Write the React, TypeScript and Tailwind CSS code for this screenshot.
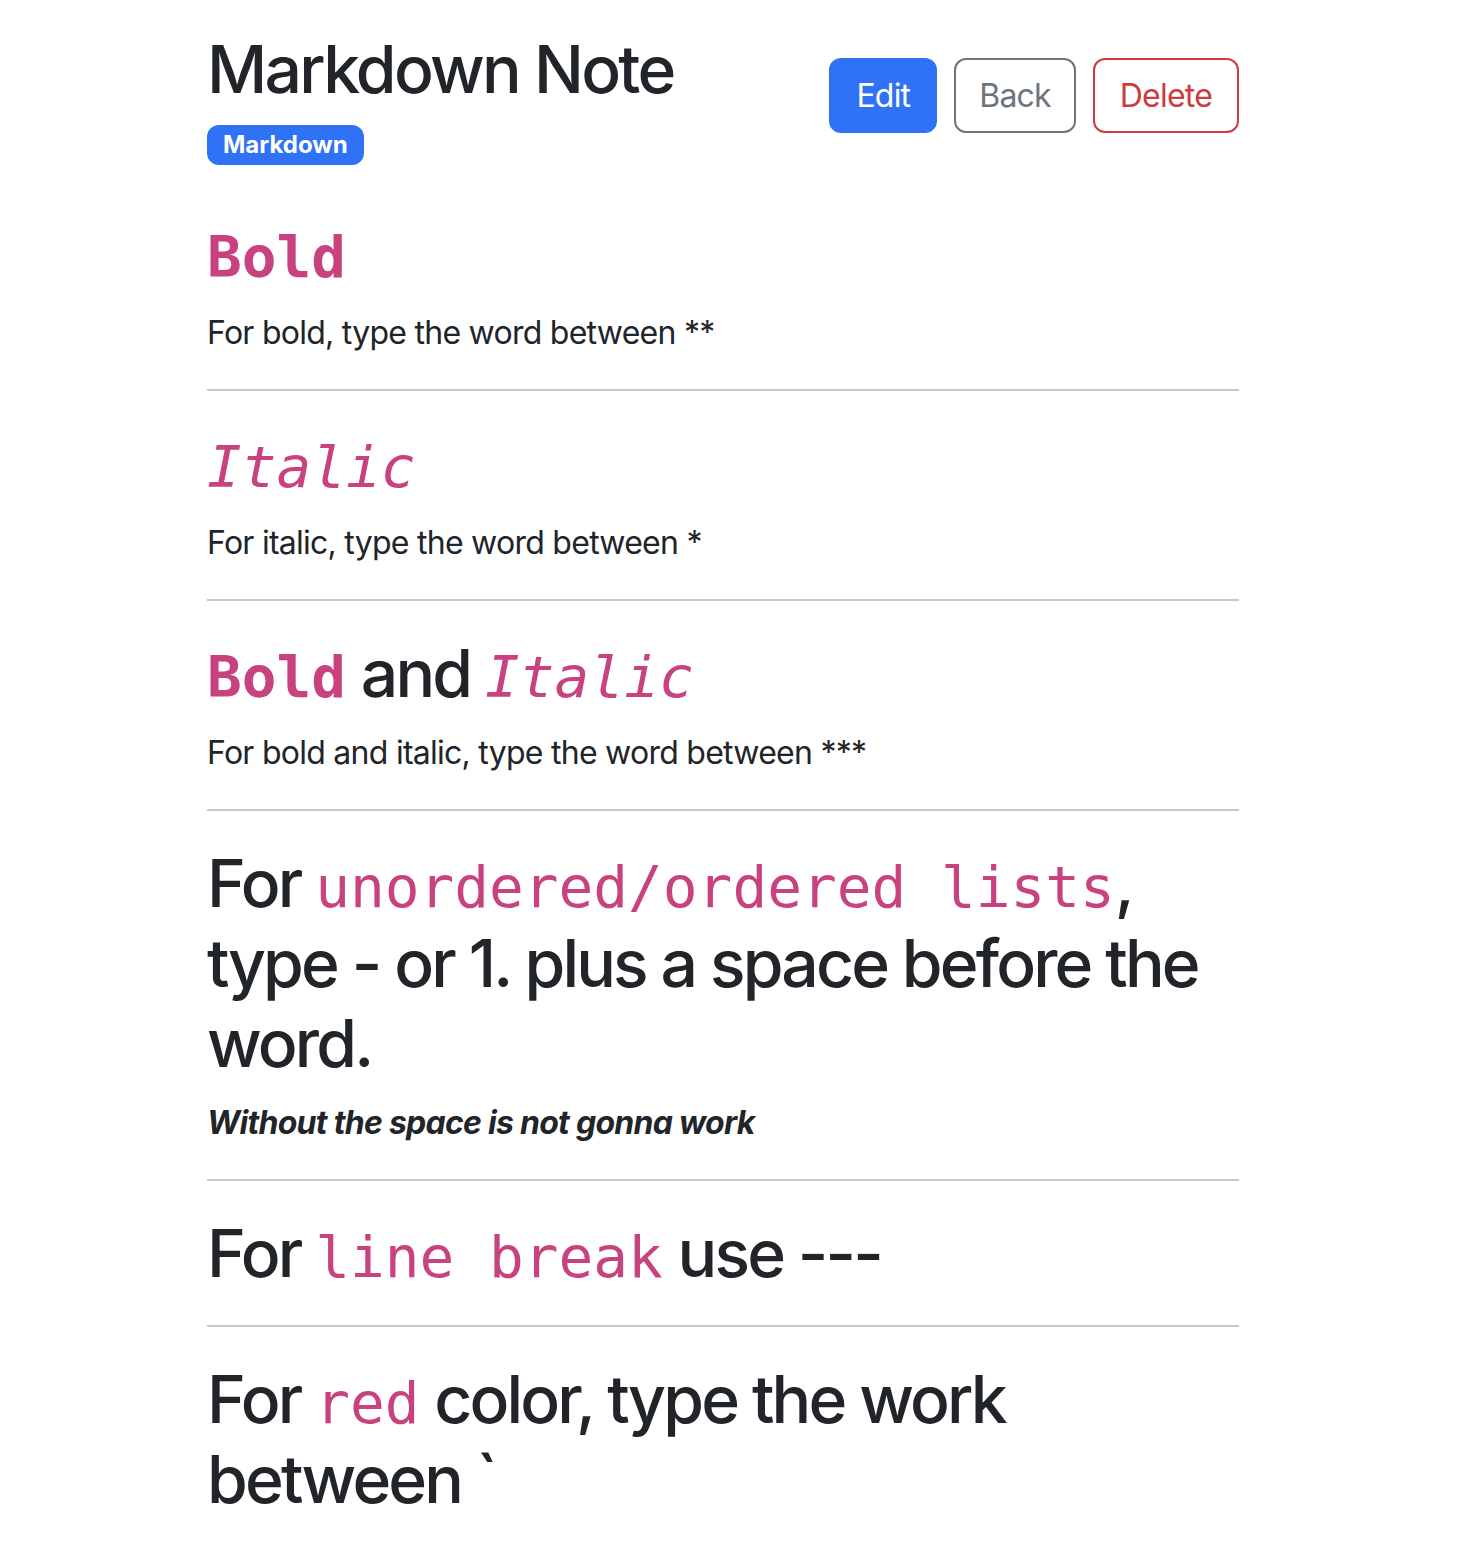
const sans = "font-['Inter','Liberation_Sans',sans-serif]";
const mono =
  "font-['DejaVu_Sans_Mono','Liberation_Mono',monospace] text-[0.875em] tracking-normal text-[#c8427f]";

const Code = ({ children, className = "" }: { children: React.ReactNode; className?: string }) => (
  <code className={`${mono} ${className}`}>{children}</code>
);

const Rule = () => <hr className="my-8 border-0 border-t-2 border-[#c8c8c8]" />;

const Heading = ({ children }: { children: React.ReactNode }) => (
  <h1 className="mb-4 text-[66px] leading-[1.2125] font-medium tracking-[-0.043em]">{children}</h1>
);

const Note = ({ children, className = "" }: { children: React.ReactNode; className?: string }) => (
  <p className={`mb-8 text-[32px] leading-[1.5] ${className}`}>{children}</p>
);

export default function App() {
  return (
    <div className={`${sans} min-h-screen bg-white text-[#212529]`}>
      <div className="ml-[207px] w-[1032px] pt-[30px]">
        <div className="flex items-center justify-between">
          <div>
            <h1 className="mb-4 text-[66px] leading-[1.2] font-medium tracking-[-0.041em]">Markdown Note</h1>
            <span className="inline-block rounded-[12px] bg-[#3072f6] px-[16px] py-[8px] text-[24px] leading-none font-bold text-white">
              Markdown
            </span>
          </div>
          <div className="-mt-[4px] flex gap-[17px] text-[32px] tracking-[-0.025em]">
            <button className="h-[75px] rounded-[12px] border-2 border-[#3072f6] bg-[#3072f6] px-[25px] text-white">
              Edit
            </button>
            <button className="h-[75px] rounded-[12px] border-2 border-[#6c757d] bg-white px-[23px] text-[#6c757d]">
              Back
            </button>
            <button className="h-[75px] rounded-[12px] border-2 border-[#cc3b3f] bg-white px-[25px] text-[#cc3b3f]">
              Delete
            </button>
          </div>
        </div>

        <div className="mt-[48px] [&_p]:tracking-[-0.023em]">
          <Heading>
            <Code className="font-bold">Bold</Code>
          </Heading>
          <Note>For bold, type the word between **</Note>
          <Rule />

          <Heading>
            <Code className="italic">Italic</Code>
          </Heading>
          <Note>For italic, type the word between *</Note>
          <Rule />

          <Heading>
            <Code className="font-bold">Bold</Code> and <Code className="italic">Italic</Code>
          </Heading>
          <Note>For bold and italic, type the word between ***</Note>
          <Rule />

          <Heading>
            For <Code>unordered/ordered lists</Code>, type - or 1. plus a space before the word.
          </Heading>
          <Note className="font-bold italic">Without the space is not gonna work</Note>
          <Rule />

          <Heading>
            For <Code>line break</Code> use ---
          </Heading>
          <Rule />

          <Heading>
            For <Code>red</Code> color, type the work between `
          </Heading>
        </div>
      </div>
    </div>
  );
}
